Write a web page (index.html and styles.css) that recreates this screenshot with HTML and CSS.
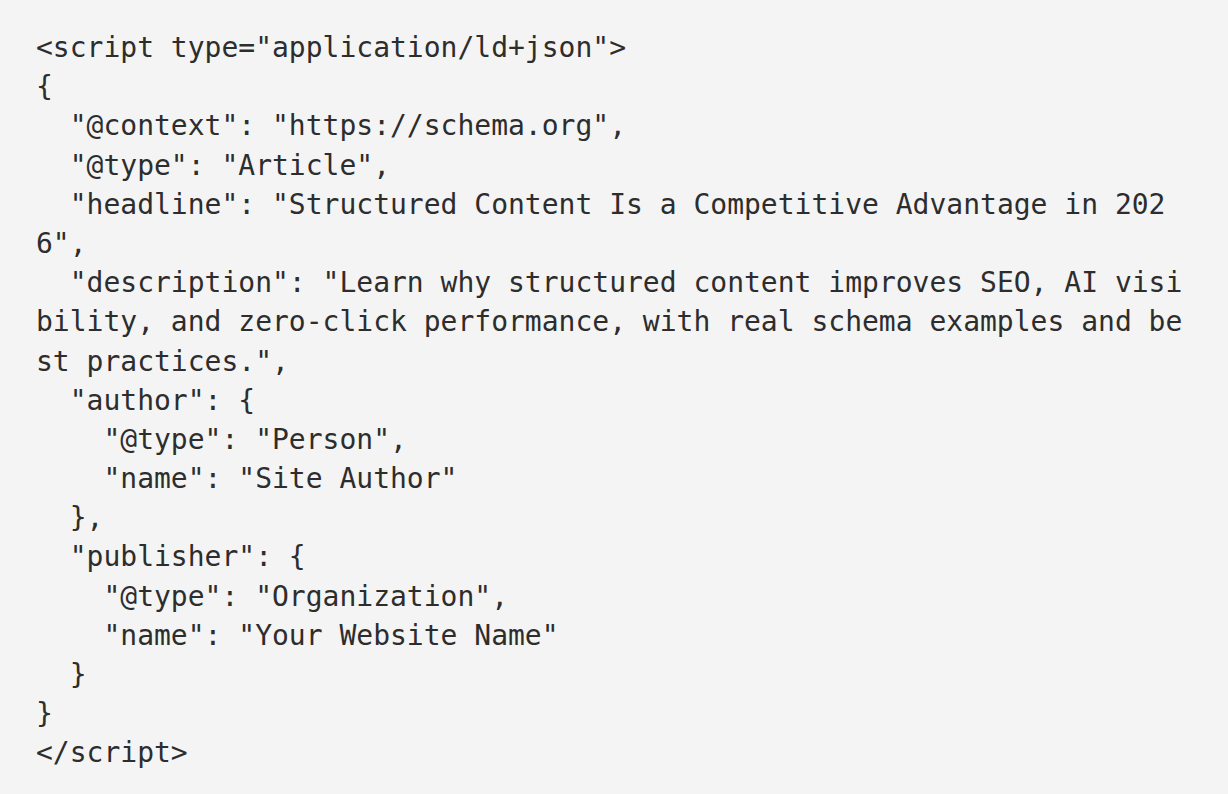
FILE: index.html
```html
<!DOCTYPE html>
<html lang="en">
<head>
<meta charset="utf-8">
<title>Schema code</title>
<link rel="stylesheet" href="styles.css">
</head>
<body>
<pre class="code"><code>&lt;script type="application/ld+json"&gt;
{
  "@context": "https://schema.org",
  "@type": "Article",
  "headline": "Structured Content Is a Competitive Advantage in 2026",
  "description": "Learn why structured content improves SEO, AI visibility, and zero-click performance, with real schema examples and best practices.",
  "author": {
    "@type": "Person",
    "name": "Site Author"
  },
  "publisher": {
    "@type": "Organization",
    "name": "Your Website Name"
  }
}
&lt;/script&gt;</code></pre>
</body>
</html>
```

FILE: styles.css
```css
html, body {
  margin: 0;
  padding: 0;
  background: #f4f4f4;
}

body {
  min-height: 794px;
}

.code {
  margin: 0;
  padding: 28px 36px 28px 36px;
  background: #f4f4f4;
  color: #2d2d2d;
  font-family: "DejaVu Sans Mono", "Liberation Mono", monospace;
  font-size: 28px;
  line-height: 1.4;
  white-space: pre-wrap;
  word-break: break-all;
}

.code code {
  font: inherit;
}
```
